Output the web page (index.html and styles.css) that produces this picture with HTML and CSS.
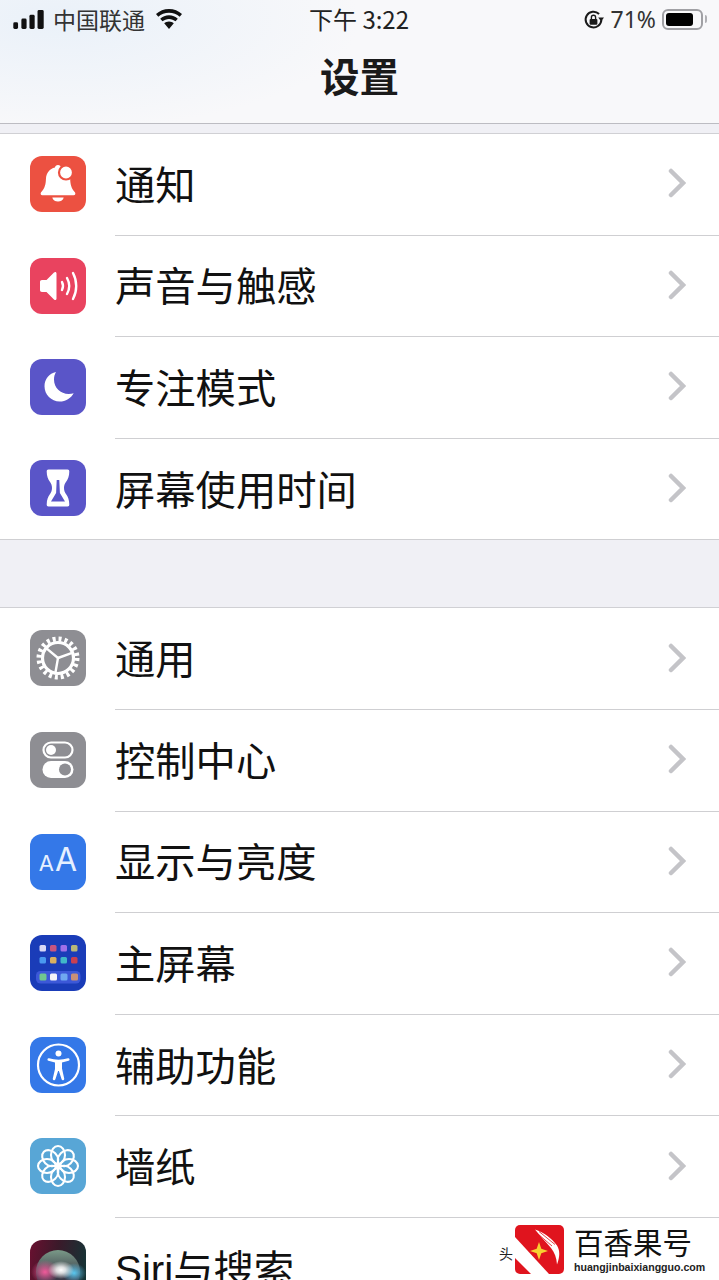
FILE: index.html
```html
<!DOCTYPE html>
<html lang="zh-CN">
<head>
<meta charset="utf-8">
<title>设置</title>
<link rel="stylesheet" href="styles.css">
</head>
<body>
<div class="page">
  <header class="header">
    <div class="status">
      <div class="status-left">
        <svg class="signal" viewBox="0 0 32 20"><rect x="0" y="13" width="5" height="7" rx="1.500"/><rect x="8.500" y="9" width="5.500" height="11" rx="1.500"/><rect x="17" y="5" width="5.500" height="15" rx="1.500"/><rect x="25.500" y="0" width="6.500" height="20" rx="1.500"/></svg>
        <span class="carrier">中国联通</span>
        <svg class="wifi" viewBox="0 0 28 20"><path d="M14 0C9 0 4.500 1.900 1 5.100l2.300 2.600C6.100 5.200 9.900 3.700 14 3.700s7.900 1.500 10.700 4L27 5.100C23.500 1.900 19 0 14 0z"/><path d="M14 6.300c-3.400 0-6.500 1.300-8.800 3.400l2.300 2.600C9.200 10.800 11.500 9.900 14 9.900s4.800.9 6.500 2.400l2.300-2.600C20.500 7.600 17.400 6.300 14 6.300z"/><path d="M14 12.500c-1.900 0-3.500.7-4.800 1.800L14 20l4.800-5.700c-1.300-1.100-2.900-1.800-4.800-1.800z"/></svg>
      </div>
      <div class="status-time">下午 3:22</div>
      <div class="status-right">
        <svg class="lock" viewBox="0 0 20 20"><path d="M17.500 10.500a7.500 7.500 0 1 1-2.200-5.800" fill="none" stroke="#1a1a1a" stroke-width="1.900"/><path d="M14.500 8h5.500l-2.700 3.800z" fill="#1a1a1a"/><rect x="6.300" y="9.500" width="7.400" height="5.500" rx="1" fill="#1a1a1a"/><path d="M8 9.500V8a2 2 0 0 1 4 0v1.500" fill="none" stroke="#1a1a1a" stroke-width="1.300"/></svg>
        <span class="percent">71%</span>
        <div class="battery"><div class="battery-fill"></div></div>
        <div class="battery-nub"></div>
      </div>
    </div>
    <h1 class="title">设置</h1>
  </header>

  <section class="group group-first">
    <div class="row">
      <div class="icon i-red">
        <svg viewBox="0 0 56 56"><g transform="translate(1.400 0) scale(.95 1)"><path fill="#fff" d="M28 9c1.800 0 3 1.200 3.200 2.600 5.500 1.200 9.200 5.500 9.600 11.500.3 5.500 1 9 5 13.200 1 1.300.4 3-1.300 3H11.500c-1.700 0-2.300-1.700-1.300-3 4-4.200 4.900-7.700 5.100-13.200.3-6 4-10.300 9.500-11.500C25 10.200 26.200 9 28 9z"/><path fill="#fff" d="M22 41.500h12c-.5 2.500-3 4-6 4s-5.500-1.500-6-4z"/></g><circle cx="36" cy="16.500" r="7" fill="#fff" stroke="#ec5141" stroke-width="2.200"/></svg>
      </div>
      <div class="row-body"><span class="label">通知</span><svg class="chev" viewBox="0 0 18 30"><path d="M3 3l12 12L3 27"/></svg></div>
    </div>
    <div class="row">
      <div class="icon i-pink">
        <svg viewBox="0 0 56 56"><path fill="#fff" d="M12 22h4.500L24 14.500c1.300-1 2.500-.5 2.500 1v25c0 1.500-1.200 2-2.500 1L16.500 34H12c-1.300 0-2-.8-2-2v-8c0-1.200.7-2 2-2z"/><g fill="none" stroke="#fff" stroke-width="2.400" stroke-linecap="round"><path d="M32 24c1.300 2.600 1.300 5.400 0 8"/><path d="M37 20c2.800 5 2.800 11 0 16"/><path d="M43 15c4.300 8 4.300 18 0 26"/></g></svg>
      </div>
      <div class="row-body"><span class="label">声音与触感</span><svg class="chev" viewBox="0 0 18 30"><path d="M3 3l12 12L3 27"/></svg></div>
    </div>
    <div class="row">
      <div class="icon i-indigo">
        <svg viewBox="0 0 56 56"><path fill="#fff" d="M26 13c-6.800 1.300-11.500 7-11.500 14.300 0 8.400 6.700 15.200 15.200 15.200 6 0 11.200-3.300 14-8.300-1.500.5-3.200.8-5 .8-8.300 0-14.700-6.400-14.700-14.500 0-2.700.7-5.300 2-7.500z"/></svg>
      </div>
      <div class="row-body"><span class="label">专注模式</span><svg class="chev" viewBox="0 0 18 30"><path d="M3 3l12 12L3 27"/></svg></div>
    </div>
    <div class="row row-last">
      <div class="icon i-indigo">
        <svg viewBox="0 0 56 56"><path fill="#fff" d="M18.500 9.500h19c1.300 0 1.800.8 1.800 2 0 4.500-1.500 8-3 10-1.500 2-2.300 4-2.300 6.500s.8 4.500 2.300 6.500c1.500 2 3 5.500 3 10 0 1.200-.5 2-1.800 2h-19c-1.300 0-1.800-.8-1.800-2 0-4.500 1.500-8 3-10 1.500-2 2.300-4 2.300-6.500s-.8-4.500-2.300-6.500c-1.500-2-3-5.500-3-10 0-1.200.5-2 1.800-2z"/><path fill="#5a55c8" d="M26.700 20h2.600l.6 13 5.100 8.500H21l5.100-8.500z"/></svg>
      </div>
      <div class="row-body"><span class="label">屏幕使用时间</span><svg class="chev" viewBox="0 0 18 30"><path d="M3 3l12 12L3 27"/></svg></div>
    </div>
  </section>

  <section class="group group-second">
    <div class="row">
      <div class="icon i-gray">
        <svg viewBox="0 0 56 56"><circle cx="28" cy="28" r="15.500" fill="none" stroke="#fff" stroke-width="3.200"/><circle cx="28" cy="28" r="19" fill="none" stroke="#fff" stroke-width="5" stroke-dasharray="3 2.969"/><g stroke="#fff" stroke-width="2.400" stroke-linecap="round" transform="rotate(190 28 28)"><path d="M28 28V13"/><path d="M28 28l13 7.500"/><path d="M28 28l-13 7.500"/></g></svg>
      </div>
      <div class="row-body"><span class="label">通用</span><svg class="chev" viewBox="0 0 18 30"><path d="M3 3l12 12L3 27"/></svg></div>
    </div>
    <div class="row">
      <div class="icon i-gray">
        <svg viewBox="0 0 56 56"><rect x="13.500" y="10.500" width="29" height="15" rx="7.500" fill="none" stroke="#fff" stroke-width="2.200"/><circle cx="21" cy="18" r="5" fill="#fff"/><rect x="12.500" y="29" width="31" height="17" rx="8.500" fill="#fff"/><circle cx="35" cy="37.500" r="6" fill="#8e8e93"/></svg>
      </div>
      <div class="row-body"><span class="label">控制中心</span><svg class="chev" viewBox="0 0 18 30"><path d="M3 3l12 12L3 27"/></svg></div>
    </div>
    <div class="row">
      <div class="icon i-blue icon-aa"><span class="aa-small">A</span><span class="aa-big">A</span></div>
      <div class="row-body"><span class="label">显示与亮度</span><svg class="chev" viewBox="0 0 18 30"><path d="M3 3l12 12L3 27"/></svg></div>
    </div>
    <div class="row">
      <div class="icon i-navy">
        <svg viewBox="0 0 56 56"><g><rect x="9.500" y="10" width="6.500" height="6.500" rx="1.500" fill="#d8d8f5"/><rect x="20" y="10" width="6.500" height="6.500" rx="1.500" fill="#c8557f"/><rect x="30.500" y="10" width="6.500" height="6.500" rx="1.500" fill="#a070e8"/><rect x="41" y="10" width="6.500" height="6.500" rx="1.500" fill="#b8b878"/><rect x="9.500" y="22" width="6.500" height="6.500" rx="1.500" fill="#4a9af0"/><rect x="20" y="22" width="6.500" height="6.500" rx="1.500" fill="#d8b060"/><rect x="30.500" y="22" width="6.500" height="6.500" rx="1.500" fill="#40b8c8"/><rect x="41" y="22" width="6.500" height="6.500" rx="1.500" fill="#c84050"/><rect x="6" y="36" width="44.500" height="12.500" rx="4.500" fill="#3c58d8"/><rect x="9.500" y="38.500" width="7" height="7" rx="1.500" fill="#70c890"/><rect x="20" y="38.500" width="7" height="7" rx="1.500" fill="#f4f4f8"/><rect x="30.500" y="38.500" width="7" height="7" rx="1.500" fill="#70a8f0"/><rect x="41" y="38.500" width="7" height="7" rx="1.500" fill="#c89078"/></g></svg>
      </div>
      <div class="row-body"><span class="label">主屏幕</span><svg class="chev" viewBox="0 0 18 30"><path d="M3 3l12 12L3 27"/></svg></div>
    </div>
    <div class="row">
      <div class="icon i-blue">
        <svg viewBox="0 0 56 56"><circle cx="28.500" cy="28" r="20.500" fill="none" stroke="#fff" stroke-width="2.200"/><circle cx="28.500" cy="16.500" r="3" fill="#fff"/><path fill="#fff" d="M19 21.300c-.8-.2-1.400.2-1.500.9-.2.700.2 1.300.9 1.500l6.600 1.800v6.500l-2.200 9.500c-.2.900.2 1.500 1 1.700.8.200 1.400-.2 1.600-1l2.700-8.200h.8l2.700 8.200c.2.800.8 1.200 1.600 1 .8-.2 1.200-.8 1-1.700L32 31.500V25.500l6.600-1.800c.7-.2 1.100-.8.900-1.500-.1-.7-.7-1.100-1.500-.9-3 .8-6.300 1.400-9.500 1.400s-6.500-.6-9.500-1.400z"/></svg>
      </div>
      <div class="row-body"><span class="label">辅助功能</span><svg class="chev" viewBox="0 0 18 30"><path d="M3 3l12 12L3 27"/></svg></div>
    </div>
    <div class="row">
      <div class="icon i-sky">
        <svg viewBox="0 0 56 56"><g fill="none" stroke="#fff" stroke-width="2.100"><ellipse cx="28" cy="17" rx="7" ry="9"/><ellipse cx="28" cy="39" rx="7" ry="9"/><ellipse cx="17" cy="28" rx="9" ry="7"/><ellipse cx="39" cy="28" rx="9" ry="7"/><ellipse cx="28" cy="17" rx="7" ry="9" transform="rotate(45 28 28)"/><ellipse cx="28" cy="39" rx="7" ry="9" transform="rotate(45 28 28)"/><ellipse cx="17" cy="28" rx="9" ry="7" transform="rotate(45 28 28)"/><ellipse cx="39" cy="28" rx="9" ry="7" transform="rotate(45 28 28)"/></g><circle cx="28" cy="28" r="3" fill="#fff"/></svg>
      </div>
      <div class="row-body"><span class="label">墙纸</span><svg class="chev" viewBox="0 0 18 30"><path d="M3 3l12 12L3 27"/></svg></div>
    </div>
    <div class="row">
      <div class="icon i-siri">
        <svg viewBox="0 0 56 56"><defs><radialGradient id="sp"><stop offset="0" stop-color="#f05a9a"/><stop offset="1" stop-color="#f05a9a" stop-opacity="0"/></radialGradient><radialGradient id="sb"><stop offset="0" stop-color="#5ac8f0"/><stop offset="1" stop-color="#5ac8f0" stop-opacity="0"/></radialGradient><radialGradient id="sw"><stop offset="0" stop-color="#fff"/><stop offset=".35" stop-color="#fff" stop-opacity=".8"/><stop offset="1" stop-color="#fff" stop-opacity="0"/></radialGradient><linearGradient id="sg" x1="0" y1="0" x2="0" y2="1"><stop offset="0" stop-color="#7a9a88"/><stop offset=".6" stop-color="#3a3a48"/></linearGradient></defs><circle cx="28" cy="32" r="22" fill="url(#sg)"/><ellipse cx="15" cy="32" rx="14" ry="12" fill="url(#sp)"/><ellipse cx="44" cy="33" rx="12" ry="10" fill="url(#sb)"/><ellipse cx="31" cy="30" rx="13" ry="9" fill="url(#sw)"/></svg>
      </div>
      <div class="row-body"><span class="label">Siri与搜索</span></div>
    </div>
  </section>

  <aside class="mark">
    <span class="mark-cut">头</span>
    <svg class="mark-logo" viewBox="0 0 49 49"><rect width="49" height="49" rx="5" fill="#e0141e"/><path d="M0 12L34 49H16L0 33z" fill="#fff"/><path d="M20 4.500c9 3 17 9 22 16 3 5 3 11 0 19-.5-7-2.500-12-6-16.500C31 17 25 11 20 4.500z" fill="#fff"/><path d="M24 6.500l16 13M23 9l14 12" stroke="#e0141e" stroke-width=".8"/><path d="M24 17l2.300 6.700 6.700 2.300-6.700 2.300L24 35l-2.300-6.700-6.700-2.300 6.700-2.300z" fill="#f8d030"/></svg>
    <div class="mark-text">
      <span class="mark-name">百香果号</span>
      <span class="mark-url">huangjinbaixiangguo.com</span>
    </div>
  </aside>
</div>
</body>
</html>
```
FILE: styles.css
```css
* { box-sizing: border-box; margin: 0; padding: 0; }
html, body { width: 719px; height: 1280px; overflow: hidden; background: #f0f0f5; }
body { font-family: "Noto Sans CJK SC", "Noto Sans", sans-serif; color: #111; }
.page { position: relative; width: 719px; height: 1280px; overflow: hidden; }

.header {
  height: 124px;
  border-bottom: 1px solid #bcbcc2;
  background:
    radial-gradient(ellipse 300px 110px at 60px 20px, #eaf1f9 0%, rgba(234,241,249,0) 100%),
    #f8f8fa;
}
.status { height: 38px; display: flex; align-items: center; justify-content: space-between; position: relative; padding: 0 12px 0 13px; }
.status-left { display: flex; align-items: center; }
.signal { width: 31px; height: 19px; fill: #111; margin-right: 9px; }
.carrier { font-size: 23px; line-height: 38px; color: #333; width: 92px; white-space: nowrap; }
.wifi { width: 28px; height: 20px; fill: #111; margin-left: 10px; }
.status-time { position: absolute; left: 309px; top: 0; font-size: 24px; line-height: 38px; color: #222; white-space: nowrap; }
.status-right { display: flex; align-items: center; }
.lock { width: 21px; height: 21px; margin-right: 7px; }
.percent { font-family: "Noto Sans", sans-serif; font-size: 23px; line-height: 38px; color: #333; margin-right: 6px; }
.battery { width: 41px; height: 21px; border: 2px solid #a0a0a4; border-radius: 6px; padding: 2px; }
.battery-fill { width: 27px; height: 13px; background: #000; border-radius: 3px; }
.battery-nub { width: 2px; height: 8px; background: #b0b0b4; border-radius: 0 2px 2px 0; margin-left: 2px; }
.title { font-size: 39.500px; line-height: 74px; font-weight: 700; text-align: center; color: #1a1a1a; }

.group { background: #fff; border-top: 1px solid #d0d0d4; }
.group-first { margin-top: 9px; }
.group-second { margin-top: 67px; }

.row { height: 101.600px; display: flex; align-items: center; padding-left: 30px; }
.row-last { border-bottom: 1px solid #cfcfd2; }
.icon { width: 56px; height: 56px; border-radius: 12px; flex: none; overflow: hidden; margin-bottom: 1.500px; }
.icon svg { display: block; width: 56px; height: 56px; }
.i-red { background: #ec5141; }
.i-pink { background: #e9435f; }
.i-indigo { background: #5a55c8; }
.i-gray { background: #8e8e93; }
.i-blue { background: #3478e8; }
.i-navy { background: #1a3cb8; }
.i-sky { background: #58a6d6; }
.i-siri { background: linear-gradient(100deg, #6a1030 0%, #3a1a2a 45%, #103838 100%); }

.icon-aa { display: flex; align-items: baseline; justify-content: center; gap: 1px; font-family: "Inter", sans-serif; color: #e6f0ff; line-height: 52px; }
.aa-small { font-size: 22px; }
.aa-big { font-size: 32px; }

.row-body {
  flex: 1;
  height: 100%;
  margin-left: 29px;
  padding-right: 33px;
  display: flex;
  align-items: center;
  justify-content: space-between;
  border-bottom: 1px solid #cfcfd2;
}
.row-last .row-body { border-bottom: none; }
.label { font-family: "Liberation Sans", "Noto Sans CJK SC", sans-serif; font-size: 40.300px; line-height: 50px; padding-top: 5px; color: #111; white-space: nowrap; }
.chev { width: 18px; height: 30px; margin-bottom: 2px; fill: none; stroke: #c4c4c8; stroke-width: 4.500; stroke-linecap: round; }

.mark { position: absolute; right: 0; bottom: 0; width: 224px; height: 61px; background: #fff; }
.mark-cut { position: absolute; left: 4px; top: 24px; font-size: 14px; line-height: 20px; width: 15px; color: #222; }
.mark-logo { position: absolute; left: 20px; top: 6px; width: 49px; height: 49px; }
.mark-text { position: absolute; left: 79px; top: 5px; display: flex; flex-direction: column; }
.mark-name { font-size: 29.500px; line-height: 34px; color: #111; white-space: nowrap; }
.mark-url { font-family: "Liberation Sans", sans-serif; font-size: 10.600px; line-height: 14px; margin-top: 2px; font-weight: 700; color: #222; white-space: nowrap; }
```
